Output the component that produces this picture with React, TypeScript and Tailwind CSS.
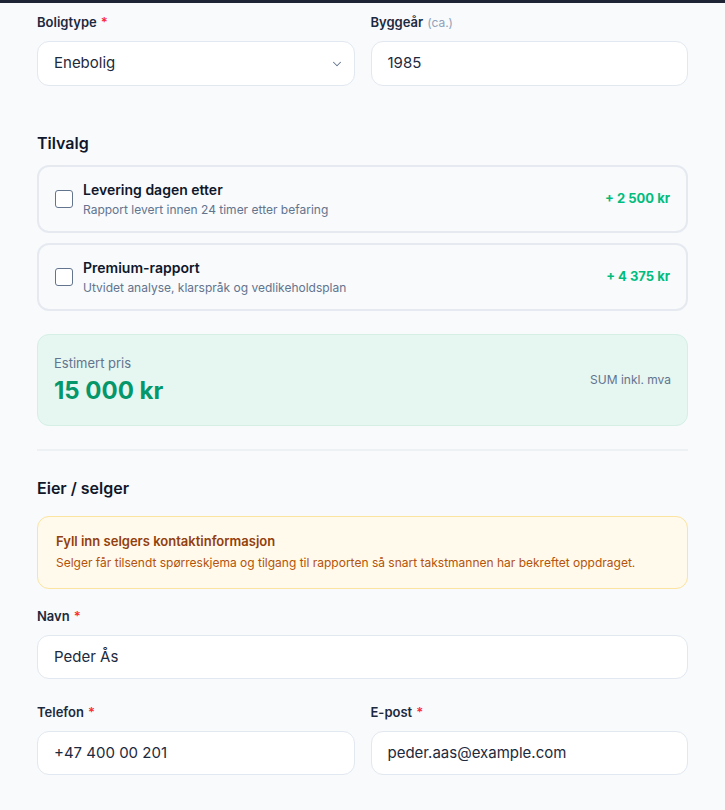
import { ChevronDown } from 'lucide-react';

const ADDONS = [
  {
    id: 'nextday',
    title: 'Levering dagen etter',
    desc: 'Rapport levert innen 24 timer etter befaring',
    price: '+ 2 500 kr',
  },
  {
    id: 'premium',
    title: 'Premium-rapport',
    desc: 'Utvidet analyse, klarspråk og vedlikeholdsplan',
    price: '+ 4 375 kr',
  },
];

function Label({ text, required, hint }: { text: string; required?: boolean; hint?: string }) {
  return (
    <div className="mb-[9px] h-5 text-[13px] leading-5 font-semibold text-slate-800">
      {text}
      {required && <span className="ml-1 text-red-500">*</span>}
      {hint && <span className="ml-1 font-normal text-xs text-slate-400">{hint}</span>}
    </div>
  );
}

function Field({ value }: { value: string }) {
  return (
    <div className="h-11 rounded-xl border border-slate-200 bg-white px-4 flex items-center text-[15px] text-slate-800">
      {value}
    </div>
  );
}

export default function App() {
  return (
    <div className="min-h-[810px] bg-[#f8fafc] font-['Inter',sans-serif]">
      <div className="h-[3px] bg-[#1e2433]" />
      <div className="px-[37px] pt-[9px] pb-8">
        {/* Property basics */}
        <div className="grid grid-cols-2 gap-4">
          <div>
            <Label text="Boligtype" required />
            <div className="mt-px h-[45px] rounded-xl border border-slate-200 bg-white pl-4 pr-2.5 flex items-center justify-between text-[15px] text-slate-800">
              <span>Enebolig</span>
              <ChevronDown size={14} className="text-slate-500" strokeWidth={1.75} />
            </div>
          </div>
          <div>
            <Label text="Byggeår" hint="(ca.)" />
            <div className="mt-px h-[45px] rounded-xl border border-slate-200 bg-white px-4 flex items-center text-[15px] text-slate-800">
              1985
            </div>
          </div>
        </div>

        {/* Add-ons */}
        <h2 className="mt-[45px] mb-2.5 text-base leading-6 font-semibold text-slate-900">Tilvalg</h2>
        <div className="flex flex-col gap-2.5">
          {ADDONS.map((a) => (
            <div
              key={a.id}
              className="h-[68px] rounded-xl border-2 border-[#e6eaf0] bg-[#f8fafc] pl-4 pr-4 flex items-center"
            >
              <div className="w-[18px] h-[18px] rounded-[3px] border border-slate-500 bg-white" />
              <div className="ml-[10px] flex-1">
                <div className="text-sm leading-5 font-semibold text-slate-900">{a.title}</div>
                <div className="mt-0.5 text-xs leading-4 text-slate-500">{a.desc}</div>
              </div>
              <div className="text-[13px] font-bold text-emerald-500">{a.price}</div>
            </div>
          ))}
        </div>

        {/* Price estimate */}
        <div className="mt-[23px] rounded-xl border border-[#d5efe5] bg-[#e6f6f1] px-4 py-[18px] flex items-center justify-between">
          <div>
            <div className="text-[13px] leading-5 text-slate-500">Estimert pris</div>
            <div className="mt-0.5 text-2xl leading-8 font-bold text-[#059669]">15 000 kr</div>
          </div>
          <div className="text-xs text-slate-500">SUM inkl. mva</div>
        </div>

        <div className="mt-[23px] h-[2px] bg-[#eef1f4]" />

        {/* Owner / seller */}
        <h2 className="mt-[25px] mb-4 text-base leading-6 font-semibold text-slate-900">Eier / selger</h2>
        <div className="rounded-xl border border-[#fbe3a0] bg-[#fffaeb] px-[18px] pt-3.5 pb-[17px]">
          <div className="text-[13px] leading-5 font-semibold text-[#92400e]">
            Fyll inn selgers kontaktinformasjon
          </div>
          <div className="mt-1 text-xs leading-4 text-[#b45309]">
            Selger får tilsendt spørreskjema og tilgang til rapporten så snart takstmannen har bekreftet oppdraget.
          </div>
        </div>

        <div className="mt-[17px]">
          <Label text="Navn" required />
          <Field value="Peder Ås" />
        </div>

        <div className="mt-[23px] grid grid-cols-2 gap-4">
          <div>
            <Label text="Telefon" required />
            <Field value="+47 400 00 201" />
          </div>
          <div>
            <Label text="E-post" required />
            <Field value="peder.aas@example.com" />
          </div>
        </div>
      </div>
    </div>
  );
}
